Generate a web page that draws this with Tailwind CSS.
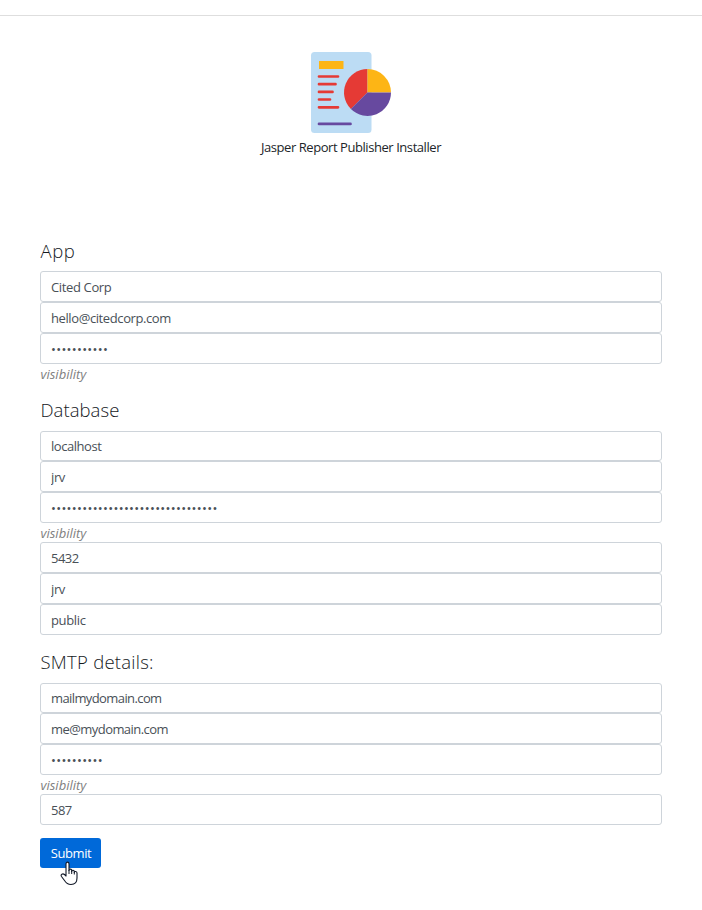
<!DOCTYPE html>
<html lang="en">
<head>
<meta charset="utf-8">
<title>Jasper Report Publisher Installer</title>
<script src="https://cdn.jsdelivr.net/npm/@tailwindcss/browser@4"></script>
</head>
<body class="bg-white font-['Open_Sans','Noto_Sans',sans-serif] text-[13px] text-[#212529] h-[910px] overflow-hidden">
<header class="h-4 border-b border-[#dedede]"></header>
<main class="px-10">
  <div class="flex flex-col items-center pt-9 h-[223px]">
    <svg class="w-[82px] h-[82px] shrink-0" viewBox="0 0 82 82">
      <rect x="1" y="0" width="60.500" height="81" rx="3.5" fill="#bcdcf4"/>
      <rect x="9" y="9" width="24.5" height="8" fill="#fdb515"/>
      <g stroke="#e53a35" stroke-width="2.7" stroke-linecap="round"><path d="M9 24.5H28M9 32.2H25.500M9 39.900H22.500M9 47.500H20M9 55.300H28"/></g>
      <path d="M9 71.900H40.500" stroke="#67499f" stroke-width="2.7" stroke-linecap="round"/>
      <path d="M57.500 40.500L40.900 57.100A23.500 23.500 0 0 1 57.500 17Z" fill="#e53a35"/>
      <path d="M57.500 40.500V17A23.500 23.500 0 0 1 81 40.500Z" fill="#fdb515"/>
      <path d="M57.500 40.500H81A23.500 23.500 0 0 1 40.900 57.100Z" fill="#67499f"/>
    </svg>
    <p class="mt-[3px] leading-5 tracking-[-0.44px] whitespace-nowrap">Jasper Report Publisher Installer</p>
  </div>
  <form>
    <section class="h-[159.4px]">
      <h2 class="h-[32.2px] pl-[0.5px] leading-[24px] text-[18.5px] font-[350] text-[#15191d] tracking-[0.6px]">App</h2>
      <input class="block w-full h-[30.8px] px-[10px] border border-[#ced4da] rounded-[3px] text-[#495057] tracking-[-0.36px]" value="Cited Corp">
      <input class="block w-full h-[30.8px] px-[10px] pt-[1px] border border-[#ced4da] rounded-[3px] text-[#495057] tracking-[-0.4px]" value="hello@citedcorp.com">
      <input type="password" class="block w-full h-[30.8px] px-[10px] pt-[1px] border border-[#ced4da] rounded-[3px] text-[#495057] tracking-[0.3px]" value="abcdefghijk">
      <i class="block h-[19.5px] pl-[0.5px] leading-[21px] text-[#808080] tracking-[0px]">visibility</i>
    </section>
    <section class="h-[252.1px]">
      <h2 class="h-[32.2px] pl-[0.5px] leading-[24px] text-[18.5px] font-[350] text-[#15191d] tracking-[0.05px]">Database</h2>
      <input class="block w-full h-[30.8px] px-[10px] border border-[#ced4da] rounded-[3px] text-[#495057] tracking-[-0.45px]" value="localhost">
      <input class="block w-full h-[30.8px] px-[10px] border border-[#ced4da] rounded-[3px] text-[#495057] tracking-[-0.36px]" value="jrv">
      <input type="password" class="block w-full h-[30.8px] px-[10px] border border-[#ced4da] rounded-[3px] text-[#495057] tracking-[0.32px]" value="abcdefghijklmnopqrstuvwxyz012345">
      <i class="block h-[19.5px] pl-[0.5px] leading-[21px] text-[#808080] tracking-[0px]">visibility</i>
      <input class="block w-full h-[30.8px] px-[10px] border border-[#ced4da] rounded-[3px] text-[#495057] tracking-[-0.5px]" value="5432">
      <input class="block w-full h-[30.8px] px-[10px] border border-[#ced4da] rounded-[3px] text-[#495057] tracking-[-0.36px]" value="jrv">
      <input class="block w-full h-[30.8px] px-[10px] pt-[1px] border border-[#ced4da] rounded-[3px] text-[#495057] tracking-[-0.36px]" value="public">
    </section>
    <section>
      <h2 class="h-[32.2px] pl-[0.5px] leading-[24px] text-[18.5px] font-[350] text-[#15191d] tracking-[0.25px]">SMTP details:</h2>
      <input class="block w-full h-[30.8px] px-[10px] border border-[#ced4da] rounded-[3px] text-[#495057] tracking-[-0.6px]" value="mailmydomain.com">
      <input class="block w-full h-[30.8px] px-[10px] border border-[#ced4da] rounded-[3px] text-[#495057] tracking-[-0.56px]" value="me@mydomain.com">
      <input type="password" class="block w-full h-[30.8px] px-[10px] border border-[#ced4da] rounded-[3px] text-[#495057] tracking-[0.3px]" value="abcdefghij">
      <i class="block h-[19.2px] pl-[0.5px] leading-[21px] text-[#808080] tracking-[0px]">visibility</i>
      <input class="block w-full h-[30.8px] px-[10px] border border-[#ced4da] rounded-[3px] text-[#495057] tracking-[-0.5px]" value="587">
    </section>
    <div class="relative mt-[12.9px] w-[61px]">
      <button type="button" class="block w-[61px] h-[30px] pt-[2px] pl-px rounded-[3px] bg-[#0069d9] text-white tracking-[-0.45px]">Submit</button>
      <svg class="absolute left-[20px] top-[23px] w-[20px] h-[25px]" viewBox="0 0 20 25">
        <path d="M6 15V3C6 .5 9 .5 9 3V9.500C9 7.500 11.700 7.700 11.700 9.700V10.500C11.700 8.700 14.300 9 14.300 10.700V11.500C14.300 9.900 17 10.200 17 12V17C17 21 15 23.500 11 23.500C7.500 23.500 6 22 4.500 19.500L1.500 15.500C.3 13.500 2.700 12 4.500 13.500Z" fill="#fff" stroke="#111827" stroke-width="1.1" stroke-linejoin="round"/>
        <path d="M9 9V13M11.700 10V13M14.300 11V13.500" stroke="#111827" stroke-width="1" fill="none"/>
      </svg>
    </div>
  </form>
</main>
</body>
</html>
